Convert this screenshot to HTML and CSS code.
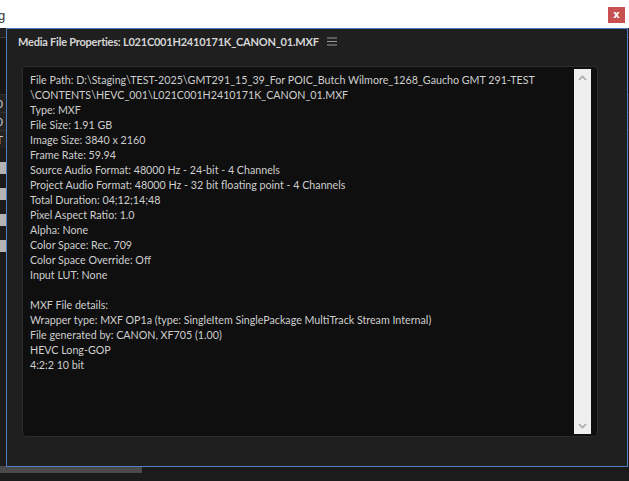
FILE: index.html
```html
<!DOCTYPE html>
<html>
<head>
<meta charset="utf-8">
<link rel="stylesheet" href="styles.css">
</head>
<body>
<div class="backdrop">
  <div class="bd-top"><span class="bd-g">g</span></div>
  <div class="bd-bar"></div>
  <div class="bd-panel"></div>
  <div class="bd-row"><span class="bd-ch">0</span></div>
  <div class="bd-row"><span class="bd-ch">0</span></div>
  <div class="bd-row"><span class="bd-ch">T</span></div>
  <div class="bd-chip"></div>
  <div class="bd-chip"></div>
  <div class="bd-chip"></div>
  <div class="bd-chip"></div>
  <div class="bd-fill"></div>
  <div class="bd-scroll"><div class="bd-thumb"></div></div>
</div>

<button class="close-btn" type="button">x</button>

<div class="dialog">
  <div class="dialog-head">
    <span class="dialog-title">Media File Properties: L021C001H2410171K_CANON_01.MXF</span>
    <span class="menu-icon">
      <svg width="10" height="9" viewBox="0 0 10 9"><path d="M0 1h10M0 4.5h10M0 8h10" stroke="#9a9a9a" stroke-width="1" fill="none"/></svg>
    </span>
  </div>
  <div class="info-box">
    <div class="info-text">
      <div>File Path: D:\Staging\TEST-2025\GMT291_15_39_For POIC_Butch Wilmore_1268_Gaucho GMT 291-TEST</div>
      <div>\CONTENTS\HEVC_001\L021C001H2410171K_CANON_01.MXF</div>
      <div>Type: MXF</div>
      <div>File Size: 1.91 GB</div>
      <div>Image Size: 3840 x 2160</div>
      <div>Frame Rate: 59.94</div>
      <div>Source Audio Format: 48000 Hz - 24-bit - 4 Channels</div>
      <div>Project Audio Format: 48000 Hz - 32 bit floating point - 4 Channels</div>
      <div>Total Duration: 04;12;14;48</div>
      <div>Pixel Aspect Ratio: 1.0</div>
      <div>Alpha: None</div>
      <div>Color Space: Rec. 709</div>
      <div>Color Space Override: Off</div>
      <div>Input LUT: None</div>
      <div class="blank">&nbsp;</div>
      <div>MXF File details:</div>
      <div>Wrapper type: MXF OP1a (type: SingleItem SinglePackage MultiTrack Stream Internal)</div>
      <div>File generated by: CANON, XF705 (1.00)</div>
      <div>HEVC Long-GOP</div>
      <div>4:2:2 10 bit</div>
    </div>
    <div class="scrollbar">
      <svg class="arrow" width="9" height="6" viewBox="0 0 9 6"><path d="M1 5L4.5 1.5L8 5" stroke="#a8a8a8" stroke-width="1.6" fill="none"/></svg>
      <svg class="arrow" width="9" height="6" viewBox="0 0 9 6"><path d="M1 1L4.5 4.5L8 1" stroke="#a8a8a8" stroke-width="1.6" fill="none"/></svg>
    </div>
  </div>
</div>
</body>
</html>
```
FILE: styles.css
```css
html, body {
  margin: 0;
  padding: 0;
}
body {
  width: 629px;
  height: 481px;
  overflow: hidden;
  position: relative;
  background: #1c1c1c;
  font-family: "Lato", "Open Sans", sans-serif;
}

/* background application (behind the dialog) */
.backdrop {
  display: flex;
  flex-direction: column;
  width: 629px;
  height: 481px;
}
.bd-top {
  height: 28px;
  background: #ffffff;
  position: relative;
  overflow: hidden;
}
.bd-g {
  position: absolute;
  left: -2px;
  top: 8px;
  font-size: 13px;
  color: #333;
  font-family: "Liberation Sans", sans-serif;
}
.bd-bar {
  height: 9px;
  background: #202020;
  border-bottom: 1px solid #3a3a3a;
}
.bd-panel {
  height: 56px;
  background: #161616;
}
.bd-row {
  height: 17px;
  border-top: 1px solid #333;
  background: #232323;
  overflow: hidden;
  position: relative;
}
.bd-ch {
  position: absolute;
  left: -4px;
  top: 1px;
  font-size: 12px;
  color: #c8c8c8;
}
.bd-chip {
  height: 12px;
  margin-top: 14px;
  width: 12px;
  background: #b4b4b4;
}
.bd-fill {
  flex: 1;
  background: #1c1c1c;
}
.bd-scroll {
  height: 7px;
  background: #1a1a1a;
  margin-bottom: 8px;
}
.bd-thumb {
  width: 142px;
  height: 7px;
  background: #4a4a4a;
}

/* close button of the host window */
.close-btn {
  position: absolute;
  left: 608px;
  top: 7px;
  width: 17px;
  height: 16px;
  margin: 0;
  padding: 0;
  border: none;
  background: #c75050;
  color: #ffffff;
  font-family: "DejaVu Sans", sans-serif;
  font-weight: bold;
  font-size: 10px;
  line-height: 14px;
  text-align: center;
}

/* dialog window */
.dialog {
  position: absolute;
  left: 6px;
  top: 28px;
  width: 620px;
  height: 437px;
  border: 1px solid #4f7fc0;
  background: #1f1f1f;
  display: flex;
  flex-direction: column;
}
.dialog-head {
  height: 28px;
  display: flex;
  align-items: center;
  padding-left: 11px;
  gap: 8px;
  margin-top: -2px;
}
.dialog-title {
  color: #d6d6d6;
  font-size: 11px;
  font-weight: bold;
  letter-spacing: -0.22px;
}
.menu-icon {
  display: flex;
  align-items: center;
  padding-top: 1px;
}
.info-box {
  margin: 11px 0 0 15px;
  width: 576px;
  height: 371px;
  background: #0f0f0f;
  border: 1px solid #2c2c2c;
  border-radius: 4px;
  display: flex;
  padding: 2px 6px 2px 0;
  box-sizing: border-box;
}
.info-text {
  flex: 1;
  padding: 3px 0 0 7px;
  color: #cecece;
  font-size: 10.7px;
  line-height: 15px;
  white-space: nowrap;
  overflow: hidden;
}
.scrollbar {
  width: 17px;
  background: #efefef;
  display: flex;
  flex-direction: column;
  justify-content: space-between;
  align-items: center;
  padding: 6px 0 5px;
  box-sizing: border-box;
}
.arrow {
  display: block;
}
```
